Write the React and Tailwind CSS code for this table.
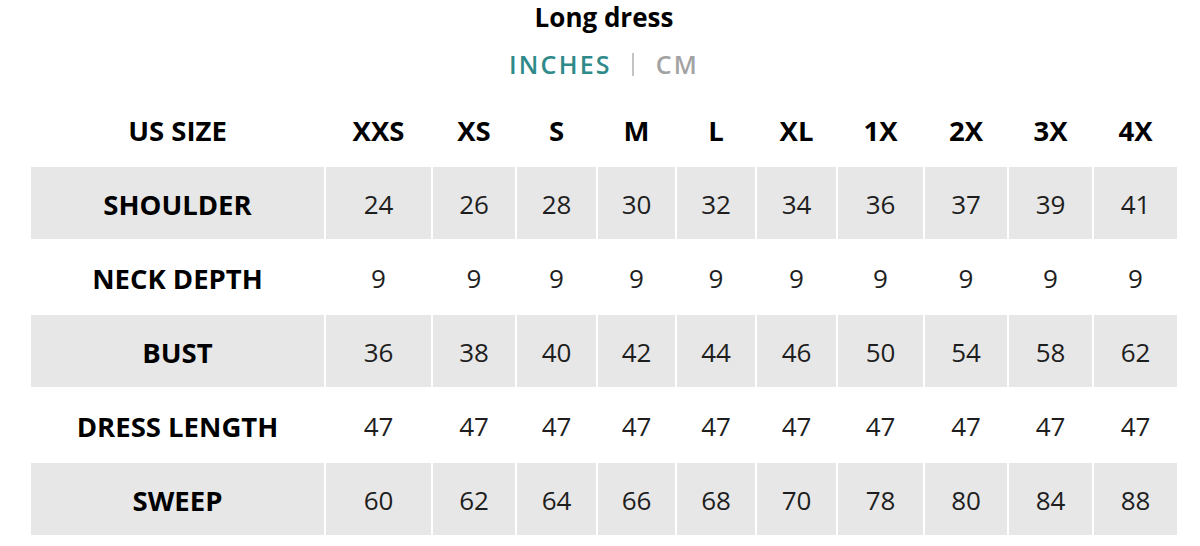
import React from 'react';

const sizes = ['XXS', 'XS', 'S', 'M', 'L', 'XL', '1X', '2X', '3X', '4X'];

const rows = [
  { label: 'SHOULDER', values: [24, 26, 28, 30, 32, 34, 36, 37, 39, 41], shaded: true },
  { label: 'NECK DEPTH', values: [9, 9, 9, 9, 9, 9, 9, 9, 9, 9], shaded: false },
  { label: 'BUST', values: [36, 38, 40, 42, 44, 46, 50, 54, 58, 62], shaded: true },
  { label: 'DRESS LENGTH', values: [47, 47, 47, 47, 47, 47, 47, 47, 47, 47], shaded: false },
  { label: 'SWEEP', values: [60, 62, 64, 66, 68, 70, 78, 80, 84, 88], shaded: true },
];

const SizeChart = () => {
  return (
    <div className="w-[1200px] h-[546px] bg-white overflow-hidden font-['Open_Sans',sans-serif]">
      <div className="ml-[31px] w-[1146px]">
        <h2 className="h-[34px] text-center text-[26px] leading-[34px] font-bold text-black">
          Long dress
        </h2>
        <div className="flex items-center justify-center h-[30px] mt-[15px] text-[25px] leading-[30px] font-semibold tracking-[2.2px]">
          <span className="text-[#2f8a89]">INCHES</span>
          <span className="ml-[20px] mr-[22px] w-[2px] h-[23px] bg-[#c4c4c4]" />
          <span className="text-[#a3a3a3]">CM</span>
        </div>

        <div className="mt-[14px] grid grid-cols-[293px_105px_82px_79px_77px_78px_79px_85px_82px_83px_83px] auto-rows-[72px] gap-[2px]">
          <div className="flex items-center justify-center pt-[4px] text-[27.5px] font-bold text-black">US SIZE</div>
          {sizes.map((s) => (
            <div key={s} className="flex items-center justify-center pt-[4px] text-[27.5px] font-bold text-black">
              {s}
            </div>
          ))}

          {rows.map((row) => (
            <React.Fragment key={row.label}>
              <div
                className={`flex items-center justify-center pt-[3px] text-[27.5px] font-bold text-black ${
                  row.shaded ? 'bg-[#e7e7e7]' : ''
                }`}
              >
                {row.label}
              </div>
              {row.values.map((v, i) => (
                <div
                  key={i}
                  className={`flex items-center justify-center pt-[3px] text-[26px] text-[#1e1e1e] ${
                    row.shaded ? 'bg-[#e7e7e7]' : ''
                  }`}
                >
                  {v}
                </div>
              ))}
            </React.Fragment>
          ))}
        </div>
      </div>
    </div>
  );
};

export default function App() {
  return <SizeChart />;
}
